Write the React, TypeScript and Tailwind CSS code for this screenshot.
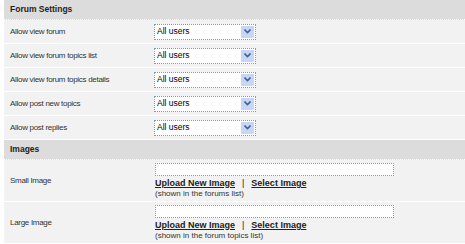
import React from "react";

const font = { fontFamily: '"Liberation Sans", Arial, sans-serif' };

function Select() {
  return (
    <div className="flex h-[16px] w-[102px] items-center justify-between border border-dotted border-[#7f9db9] bg-white pl-[2px] pr-[1px]">
      <span className="text-[8.5px] leading-none text-black">All users</span>
      <div className="flex h-[12px] w-[13px] items-center justify-center bg-[#c5d6f9]">
        <svg width="7" height="5" viewBox="0 0 7 5">
          <path d="M0.5 0.5 L3.5 3.5 L6.5 0.5" fill="none" stroke="#4d6185" strokeWidth="1.6" />
        </svg>
      </div>
    </div>
  );
}

function Header({ title }: { title: string }) {
  return (
    <div className="flex h-[20px] items-center border-b border-dotted border-white bg-[#dcdcdc] pl-[6px] text-[8.5px] font-bold text-[#222]">
      {title}
    </div>
  );
}

function SelectRow({ label }: { label: string }) {
  return (
    <div className="flex h-[24px] items-center border-b border-white bg-[#f2f2f2]">
      <div className="w-[150px] pl-[6px] text-[8px] tracking-[-0.3px] text-[#333]">{label}</div>
      <Select />
    </div>
  );
}

function ImageRow({ label, note }: { label: string; note: string }) {
  return (
    <div className="flex h-[42px] items-center border-b border-white bg-[#f2f2f2]">
      <div className="w-[150px] pl-[6px] text-[8px] tracking-[-0.3px] text-[#333]">{label}</div>
      <div className="flex flex-col pl-[1px]">
        <div className="h-[13px] w-[239px] border border-dotted border-[#999] bg-white" />
        <div className="mt-[1px] flex items-center text-[9px] font-bold leading-[12px] text-[#222]">
          <span className="underline">Upload New Image</span>
          <span className="mx-[7px] font-normal">|</span>
          <span className="underline">Select Image</span>
        </div>
        <div className="text-[8px] leading-[10px] text-[#333]">{note}</div>
      </div>
    </div>
  );
}

export default function App() {
  return (
    <div className="h-[244px] w-[465px] bg-white pl-[4px]" style={font}>
      <Header title="Forum Settings" />
      <SelectRow label="Allow view forum" />
      <SelectRow label="Allow view forum topics list" />
      <SelectRow label="Allow view forum topics details" />
      <SelectRow label="Allow post new topics" />
      <SelectRow label="Allow post replies" />
      <Header title="Images" />
      <ImageRow label="Small Image" note="(shown in the forums list)" />
      <ImageRow label="Large Image" note="(shown in the forum topics list)" />
    </div>
  );
}
